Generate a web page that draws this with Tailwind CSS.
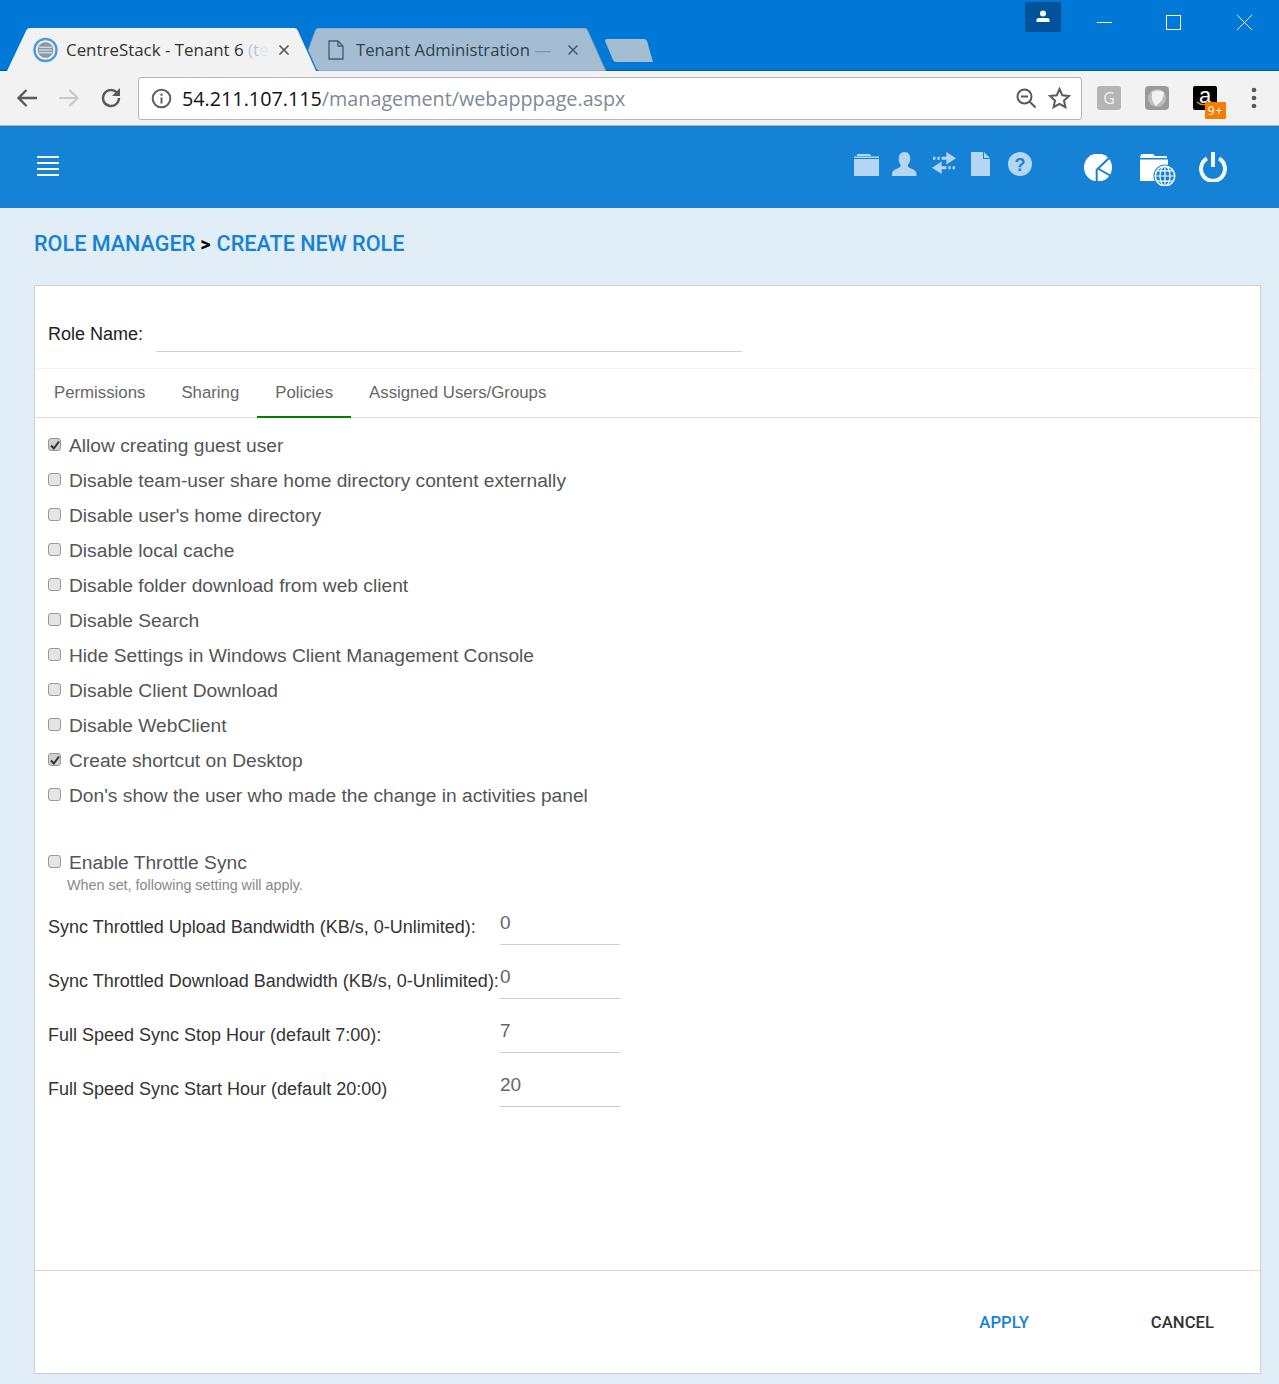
<!DOCTYPE html>
<html>
<head>
<meta charset="utf-8">
<script src="https://cdn.jsdelivr.net/npm/@tailwindcss/browser@4"></script>
</head>
<body class="bg-[#e1edf7] font-['Liberation_Sans',Arial,sans-serif] h-[1384px] overflow-hidden">

<!-- title bar / tab strip -->
<div class="h-[71px] bg-[#0078d7] relative flex items-end pl-[7px] border-b border-[#005a9e]">
  <div class="absolute left-[300px] -bottom-px w-[310px] h-[43px] flex items-center pl-[28px] font-['Open_Sans',sans-serif] text-[16.7px] text-[#2f3f4f]">
    <svg class="absolute left-0 top-0" width="310" height="43" viewBox="0 0 310 43"><path d="M20 43 Q17 43 16 40 L8 22 L15 3 Q16 0 19 0 L284 0 Q287 0 288 3 L306 43 Z" fill="#a4bdd2" stroke="#6f8ea8" stroke-width=".6"/></svg>
    <svg class="relative mr-[12px]" width="16" height="20" viewBox="0 0 16 20"><path d="M1 1h9l5 5v13H1z M10 1v5h5" fill="none" stroke="#4a5a68" stroke-width="1.3"/></svg>
    <span class="relative whitespace-nowrap">Tenant Administration <span class="text-[#7f93a5]">—</span></span>
    <svg class="absolute left-[267px] top-[16px]" width="12" height="12" viewBox="0 0 12 12"><path d="M1.500 1.500l9 9M10.500 1.500l-9 9" stroke="#4a5a68" stroke-width="1.600"/></svg>
  </div>
  <div class="relative w-[310px] h-[43px] -mb-px flex items-center pl-[26px] font-['Open_Sans',sans-serif] text-[16.9px] text-[#333]">
    <svg class="absolute left-0 top-0" width="310" height="43" viewBox="0 0 310 43"><path d="M0 43 L19 3 Q20 0 23 0 L287 0 Q290 0 291 3 L309 43 Z" fill="#f2f2f2"/></svg>
    <svg class="relative mr-[7px]" width="26" height="26" viewBox="0 0 26 26"><circle cx="12.500" cy="13" r="11" fill="#fff" stroke="#4a9be0" stroke-width="2.500"/><circle cx="12.500" cy="13" r="8" fill="#8d9aa5"/><path d="M6 10.200h13M6 13h13M6 15.800h13" stroke="#e8eef2" stroke-width="1.100"/></svg>
    <span class="relative whitespace-nowrap">CentreStack - Tenant 6 <span class="text-[#b9c6d2]">(t</span><span class="text-[#e2e6ea]">e</span></span>
    <svg class="absolute left-[271px] top-[16px]" width="12" height="12" viewBox="0 0 12 12"><path d="M1.500 1.500l9 9M10.500 1.500l-9 9" stroke="#555" stroke-width="1.600"/></svg>
  </div>
  <svg class="absolute left-[604px] top-[38px]" width="50" height="25" viewBox="0 0 50 25"><path d="M1 3 Q1 1 3 1 L40 1 Q42 1 43 3 L49 24 L12 24 Q10 24 9 22 Z" fill="#a4bdd2"/></svg>
  <!-- window controls -->
  <div class="absolute left-[1025px] top-[2px] w-[36px] h-[30px] bg-[#00529b] flex items-center justify-center pb-[2px]">
    <svg width="14" height="13" viewBox="0 0 14 13"><circle cx="7" cy="3.500" r="3" fill="#fff"/><path d="M0.500 12V9.500Q0.500 8 3 8H11Q13.500 8 13.500 9.500V12Z" fill="#fff"/></svg>
  </div>
  <div class="absolute left-[1097px] top-[22px] w-[15px] h-px bg-white"></div>
  <div class="absolute left-[1166px] top-[15px] w-[15px] h-[15px] border border-white"></div>
  <svg class="absolute left-[1237px] top-[15px]" width="15" height="15" viewBox="0 0 15 15"><path d="M0 0l15 15M15 0L0 15" stroke="#fff" stroke-width="1"/></svg>
</div>

<!-- browser toolbar -->
<div class="h-[55px] bg-[#f2f2f2] border-b border-[#a9b4be] flex items-center relative">
  <div class="w-[138px] flex items-center pl-[16px] gap-[20px]">
    <svg width="22" height="20" viewBox="0 0 22 20"><path d="M21 10H3M10.500 2L2.500 10l8 8" fill="none" stroke="#5a5a5a" stroke-width="2.400"/></svg>
    <svg width="22" height="20" viewBox="0 0 22 20"><path d="M1 10h18M11.500 2l8 8-8 8" fill="none" stroke="#c9c9c9" stroke-width="2.200"/></svg>
    <svg width="22" height="22" viewBox="0 0 22 22"><path d="M19 11a8 8 0 1 1-2.500-5.800" fill="none" stroke="#5a5a5a" stroke-width="2.400"/><path d="M20 1v8h-8z" fill="#5a5a5a"/></svg>
  </div>
  <div class="w-[944px] h-[43px] bg-white border border-[#b5b5b5] rounded-[3px] flex items-center pl-[12px] pr-[10px] font-['Open_Sans',sans-serif] text-[19.75px]">
    <svg class="mr-[10px]" width="21" height="21" viewBox="0 0 21 21"><circle cx="10.500" cy="10.500" r="8.800" fill="none" stroke="#5f5f5f" stroke-width="2"/><path d="M10.500 9.500v6M10.500 5.500v2.200" stroke="#5f5f5f" stroke-width="2"/></svg>
    <span class="text-[#111] pt-[2px]">54.211.107.115</span><span class="text-[#808a94] pt-[2px]">/management/webapppage.aspx</span>
    <svg class="ml-auto mr-[11px]" width="21" height="21" viewBox="0 0 21 21"><circle cx="8.500" cy="8.500" r="7" fill="none" stroke="#5a5a5a" stroke-width="2"/><path d="M5 8.500h7M13.500 13.500l6 6" stroke="#5a5a5a" stroke-width="2"/></svg>
    <svg width="23" height="22" viewBox="0 0 23 22"><path d="M11.500 2l2.800 6.300 6.700.7-5 4.500 1.400 6.700-5.900-3.400-5.900 3.400 1.400-6.700-5-4.500 6.700-.7z" fill="none" stroke="#5a5a5a" stroke-width="2"/></svg>
  </div>
  <div class="flex items-center pl-[15px] gap-[24px]">
    <div class="w-[24px] h-[24px] rounded-[3px] bg-[#b5b5b5] text-[#f2f2f2] text-[16px] flex items-center justify-center font-['Open_Sans',sans-serif]">G</div>
    <div class="w-[24px] h-[24px] rounded-[4px] bg-[#9a9a9a] flex items-center justify-center">
      <svg width="20" height="20" viewBox="0 0 20 20"><circle cx="10" cy="10" r="9" fill="#bdbdbd"/><path d="M5 4Q11 1 17 4Q17 12 9 18Q4 14 5 4Z" fill="#f2f2f2"/></svg>
    </div>
    <div class="relative w-[24px] h-[24px] rounded-[2px] bg-black text-white flex items-center justify-center font-['Liberation_Sans',sans-serif] text-[22px] leading-none pb-[5px]">a
      <svg class="absolute left-[3px] top-[15px]" width="12" height="6" viewBox="0 0 12 6"><path d="M1 1Q5 5 11 3" fill="none" stroke="#f08a00" stroke-width="1.300"/></svg>
      <span class="absolute left-[12px] top-[16px] w-[21px] h-[17px] bg-[#f57c00] rounded-[1px] text-white text-[12px] tracking-[1px] flex items-center justify-center font-['Open_Sans',sans-serif]">9+</span>
    </div>
    <svg class="ml-[10px]" width="6" height="22" viewBox="0 0 6 22"><circle cx="3" cy="3" r="2.300" fill="#5a5a5a"/><circle cx="3" cy="11" r="2.300" fill="#5a5a5a"/><circle cx="3" cy="19" r="2.300" fill="#5a5a5a"/></svg>
  </div>
</div>

<!-- app header -->
<div class="h-[82px] bg-[#1682d6] flex items-center relative">
  <div class="ml-[37px] -mt-[2px] w-[22px] flex flex-col gap-[4px]">
    <div class="h-[2px] bg-white"></div><div class="h-[2px] bg-white"></div><div class="h-[2px] bg-white"></div><div class="h-[2px] bg-white"></div>
  </div>
  <div class="absolute left-[854px] top-[26px] flex items-start">
    <svg class="mt-[2px]" width="25" height="22" viewBox="0 0 25 22"><path d="M3 0h13l1 2H3z M0 2.500h25V4H0z M0 5h25v17H0z" fill="#b4d6f2"/></svg>
    <svg class="ml-[13px]" width="25" height="24" viewBox="0 0 26 25"><path d="M13 0c4 0 6 3 6 7 0 3-1.500 5-2.500 6.500 0 2 1 3 4 4 3 1 5 3 5 5V25H0v-2.500c0-2 2-4 5-5 3-1 4-2 4-4C8 12 7 10 7 7c0-4 2-7 6-7z" fill="#b4d6f2"/></svg>
    <svg class="ml-[15px]" width="24" height="22" viewBox="0 0 25 23"><path d="M1 5h2.500v3H1z M5.500 5h2.500v3H5.500z M10 5h5V0l10 6.500L15 13V8h-5z M24 15h-2.500v3H24z M19.500 15H17v3h2.500z M15 15h-5v-5L0 16.500 10 23v-5h5z" fill="#b4d6f2"/></svg>
    <svg class="ml-[15px]" width="19" height="24" viewBox="0 0 19 24"><path d="M0 0h12v7h7v17H0z M13 0l6 6h-6z" fill="#b4d6f2"/></svg>
    <svg class="ml-[18px]" width="24" height="24" viewBox="0 0 24 24"><circle cx="12" cy="12" r="12" fill="#b4d6f2"/><text x="12" y="18.500" text-anchor="middle" font-size="18" font-weight="700" font-family="Liberation Sans" fill="#1682d6">?</text></svg>
  </div>
  <div class="absolute left-[1083px] top-[26px] flex items-start">
    <svg class="mt-[2px]" width="30" height="27" viewBox="0 0 30 27"><circle cx="15" cy="13.500" r="14" fill="#fff"/><path d="M26 4 L15 14.500 L28 22 M13.700 15V29" fill="none" stroke="#1682d6" stroke-width="2"/></svg>
    <svg class="ml-[27px] mt-[2px]" width="36" height="32" viewBox="0 0 36 32"><path d="M1 1Q1 0 2 0h11l2 2h11q1 0 1 1v1H0V3z M0 5.500h28V27H0z" fill="#fff"/><circle cx="25" cy="22" r="11.500" fill="#1682d6"/><circle cx="25" cy="22" r="9.800" fill="none" stroke="#fff" stroke-width="1.500"/><path d="M15.500 22h19M25 12.500v19M17 16.800h16M17 27.200h16" stroke="#fff" stroke-width="1.200"/><ellipse cx="25" cy="22" rx="5" ry="9.800" fill="none" stroke="#fff" stroke-width="1.200"/></svg>
    <svg class="ml-[23px]" width="28" height="30" viewBox="0 0 28 30"><path d="M8 6.500a12 12 0 1 0 12 0" fill="none" stroke="#f2f7fb" stroke-width="4"/><path d="M14 0v15" stroke="#f2f7fb" stroke-width="4"/></svg>
  </div>
</div>

<!-- page -->
<div class="px-[34px] pr-[18px]">
  <div class="h-[77px] flex items-center font-['Roboto',sans-serif] text-[21.6px] font-medium text-[#1682d6] pb-[5px] whitespace-nowrap">
    <span>ROLE MANAGER</span><span class="text-black text-[20px] font-bold ml-[5px] mr-[6px]">&gt;</span><span>CREATE NEW ROLE</span>
  </div>
  <div class="h-[1089px] bg-white border border-[#cfcfcf] flex flex-col">
    <div class="h-[83px] flex items-end pl-[13px] border-b border-[#f2f2f2] text-[18px] text-[#222]">
      <span class="w-[108px] pb-[20px]">Role Name:</span>
      <div class="w-[586px] mb-[16px] border-b border-[#cfcfcf]"></div>
    </div>
    <div class="h-[49px] flex border-b border-[#dcdcdc] pl-[1px] text-[16.8px] text-[#666]">
      <div class="px-[18px] flex items-center pb-[1px]">Permissions</div>
      <div class="px-[18px] flex items-center pb-[1px]">Sharing</div>
      <div class="px-[18px] flex items-center border-b-2 border-[#008000] h-[49px]">Policies</div>
      <div class="px-[18px] flex items-center pb-[1px]">Assigned Users/Groups</div>
    </div>
    <div class="pl-[13px] pt-[11px] flex flex-col text-[19.2px] text-[#555]">
      <label class="h-[35px] flex items-center"><span class="w-[13px] h-[13px] mr-[8px] mb-[4px] rounded-[3px] bg-[#d0d0d0] border border-[#999] flex items-center justify-center"><svg width="10" height="10" viewBox="0 0 10 10"><path d="M1 5.500l2.800 3L9 1.500" fill="none" stroke="#333" stroke-width="2"/></svg></span>Allow creating guest user</label>
      <label class="h-[35px] flex items-center"><span class="w-[13px] h-[13px] mr-[8px] mb-[4px] rounded-[3px] bg-[#e4e4e4] border border-[#999]"></span>Disable team-user share home directory content externally</label>
      <label class="h-[35px] flex items-center"><span class="w-[13px] h-[13px] mr-[8px] mb-[4px] rounded-[3px] bg-[#e4e4e4] border border-[#999]"></span>Disable user's home directory</label>
      <label class="h-[35px] flex items-center"><span class="w-[13px] h-[13px] mr-[8px] mb-[4px] rounded-[3px] bg-[#e4e4e4] border border-[#999]"></span>Disable local cache</label>
      <label class="h-[35px] flex items-center"><span class="w-[13px] h-[13px] mr-[8px] mb-[4px] rounded-[3px] bg-[#e4e4e4] border border-[#999]"></span>Disable folder download from web client</label>
      <label class="h-[35px] flex items-center"><span class="w-[13px] h-[13px] mr-[8px] mb-[4px] rounded-[3px] bg-[#e4e4e4] border border-[#999]"></span>Disable Search</label>
      <label class="h-[35px] flex items-center"><span class="w-[13px] h-[13px] mr-[8px] mb-[4px] rounded-[3px] bg-[#e4e4e4] border border-[#999]"></span>Hide Settings in Windows Client Management Console</label>
      <label class="h-[35px] flex items-center"><span class="w-[13px] h-[13px] mr-[8px] mb-[4px] rounded-[3px] bg-[#e4e4e4] border border-[#999]"></span>Disable Client Download</label>
      <label class="h-[35px] flex items-center"><span class="w-[13px] h-[13px] mr-[8px] mb-[4px] rounded-[3px] bg-[#e4e4e4] border border-[#999]"></span>Disable WebClient</label>
      <label class="h-[35px] flex items-center"><span class="w-[13px] h-[13px] mr-[8px] mb-[4px] rounded-[3px] bg-[#d0d0d0] border border-[#999] flex items-center justify-center"><svg width="10" height="10" viewBox="0 0 10 10"><path d="M1 5.500l2.800 3L9 1.500" fill="none" stroke="#333" stroke-width="2"/></svg></span>Create shortcut on Desktop</label>
      <label class="h-[35px] flex items-center"><span class="w-[13px] h-[13px] mr-[8px] mb-[4px] rounded-[3px] bg-[#e4e4e4] border border-[#999]"></span>Don's show the user who made the change in activities panel</label>
      <label class="h-[35px] mt-[32px] flex items-center"><span class="w-[13px] h-[13px] mr-[8px] mb-[4px] rounded-[3px] bg-[#e4e4e4] border border-[#999]"></span>Enable Throttle Sync</label>
      <div class="pl-[19px] -mt-[4px] h-[17px] leading-[17px] text-[14.35px] text-[#888]">When set, following setting will apply.</div>
    </div>
    <div class="pl-[13px] pt-[6px] flex flex-col text-[18px] text-[#333]">
      <div class="h-[54px] flex">
        <span class="w-[452px] pt-[14px] whitespace-nowrap">Sync Throttled Upload Bandwidth (KB/s, 0-Unlimited):</span>
        <div class="w-[120px] h-[45px] pt-[9px] border-b border-[#cfcfcf] text-[19px] text-[#666]">0</div>
      </div>
      <div class="h-[54px] flex">
        <span class="w-[452px] pt-[14px] whitespace-nowrap">Sync Throttled Download Bandwidth (KB/s, 0-Unlimited):</span>
        <div class="w-[120px] h-[45px] pt-[9px] border-b border-[#cfcfcf] text-[19px] text-[#666]">0</div>
      </div>
      <div class="h-[54px] flex">
        <span class="w-[452px] pt-[14px] whitespace-nowrap">Full Speed Sync Stop Hour (default 7:00):</span>
        <div class="w-[120px] h-[45px] pt-[9px] border-b border-[#cfcfcf] text-[19px] text-[#666]">7</div>
      </div>
      <div class="h-[54px] flex">
        <span class="w-[452px] pt-[14px] whitespace-nowrap">Full Speed Sync Start Hour (default 20:00)</span>
        <div class="w-[120px] h-[45px] pt-[9px] border-b border-[#cfcfcf] text-[19px] text-[#666]">20</div>
      </div>
    </div>
    <div class="mt-auto h-[103px] border-t border-[#d8d8d8] flex items-center justify-end pr-[46px] pt-[2px] font-['Roboto',sans-serif] text-[16.7px] font-medium gap-[122px]">
      <span class="text-[#1682d6]">APPLY</span><span class="text-[#333]">CANCEL</span>
    </div>
  </div>
</div>
</body>
</html>
